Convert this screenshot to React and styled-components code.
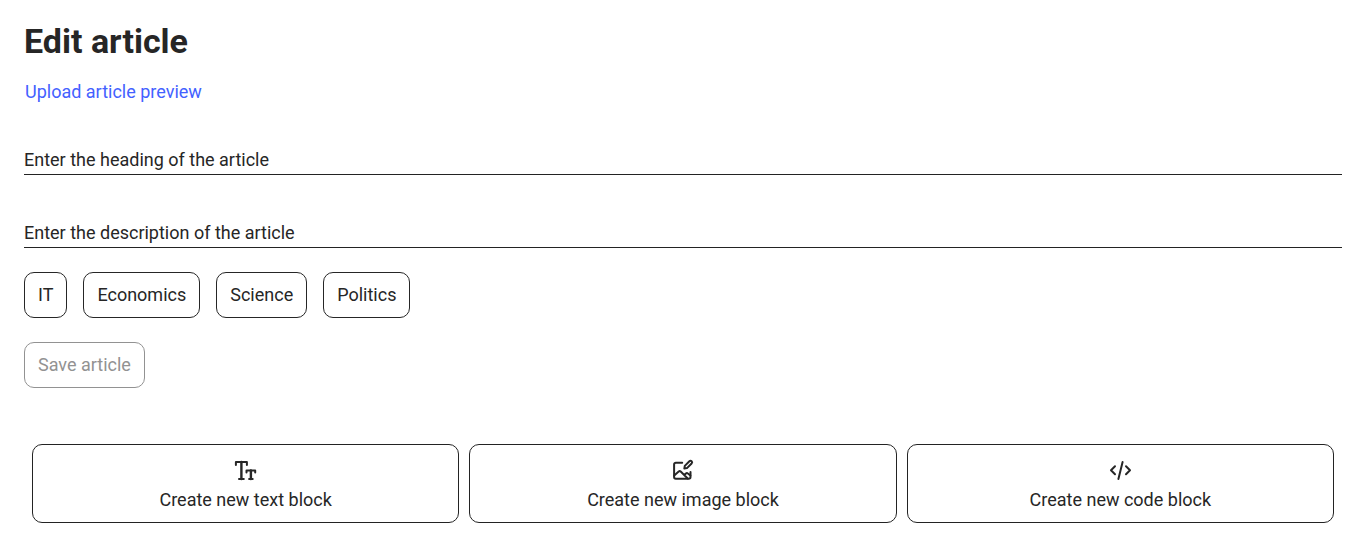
import React, { useState } from "react";
import styled, { createGlobalStyle } from "styled-components";

const GlobalStyle = createGlobalStyle`
  *, *::before, *::after { box-sizing: border-box; }
  body {
    margin: 0;
    background: #fff;
    color: #262626;
    font: 400 18px/24px Roboto, "Liberation Sans", sans-serif;
  }
  button, input { font: inherit; color: inherit; }
`;

const Page = styled.main`
  display: flex;
  flex-direction: column;
  align-items: stretch;
  gap: 24px;
  padding: 19px 24px;
`;

const Header = styled.header`
  display: flex;
  flex-direction: column;
  align-items: flex-start;
  gap: 18px;
`;

const Title = styled.h1`
  margin: 0;
  font-size: 34px;
  line-height: 44px;
  font-weight: 700;
`;

const UploadButton = styled.button`
  padding: 0 1px;
  border: 0;
  background: none;
  color: #4361ff;
  line-height: 21px;
  cursor: pointer;
`;

const TextField = styled.input`
  width: 100%;
  height: 49px;
  padding: 20px 0 2px;
  border: 0;
  border-bottom: 1px solid #232323;
  border-radius: 0;
  background: none;
  outline: none;
  &::placeholder { color: #262626; opacity: 1; }
`;

const Categories = styled.div`
  display: flex;
  flex-wrap: wrap;
  gap: 16px;
`;

const Button = styled.button`
  align-self: flex-start;
  height: 46px;
  padding: 0 13px;
  border: 1px solid currentColor;
  border-radius: 10px;
  background: ${({ $active }) => ($active ? "#eceefe" : "#fff")};
  cursor: pointer;
  &:disabled { color: #929292; cursor: default; }
`;

const BlockBar = styled.div`
  display: flex;
  gap: 10px;
  padding: 32px 8px 0;
`;

const BlockButton = styled.button`
  flex: 1 1 0;
  display: flex;
  flex-direction: column;
  align-items: center;
  gap: 5px;
  padding: 13px 12px 10px;
  border: 1px solid #232323;
  border-radius: 10px;
  background: #fff;
  cursor: pointer;
`;

const Icon = styled.svg`
  width: 25px;
  height: 25px;
  fill: none;
  stroke: currentColor;
  stroke-width: 2;
  stroke-linecap: round;
  stroke-linejoin: round;
`;

const TextIcon = () => (
  <Icon viewBox="0 0 25 25" aria-hidden="true">
    <path d="M2.900 7V4h11v3M13.500 14.600v-2.200h8.700v2.200" />
    <path d="M8.400 4v17M17.900 12.400v8.600" strokeWidth="2.400" />
    <path d="M6 21h4.800M16.100 21h3.600" />
  </Icon>
);

const ImageIcon = () => (
  <Icon viewBox="0 0 25 25" aria-hidden="true" strokeWidth="2">
    <path d="M12.200 4.700H5.800a1.700 1.700 0 0 0-1.700 1.700V19a1.700 1.700 0 0 0 1.700 1.700h13a1.700 1.700 0 0 0 1.700-1.700v-5" />
    <path d="M4.200 17.500l4.500-4q1-.8 2 0l7 7M14.500 17l1.400-1.500q1-.9 2 0l2.500 2" />
    <path d="M14.300 10.600l.5-2.700 4.600-4.600a1.550 1.550 0 0 1 2.200 2.200L17 10.100z" />
  </Icon>
);

const CodeIcon = () => (
  <Icon viewBox="0 0 25 25" aria-hidden="true">
    <path d="M7 8.200l-4 4 4 4M18 8.200l4 4-4 4M14.600 4l-4.200 17" />
  </Icon>
);

const categories = ["IT", "Economics", "Science", "Politics"];

const blocks = [
  { label: "Create new text block", Glyph: TextIcon },
  { label: "Create new image block", Glyph: ImageIcon },
  { label: "Create new code block", Glyph: CodeIcon },
];

export default function App() {
  const [selected, setSelected] = useState([]);
  const toggle = (name) =>
    setSelected((list) => (list.includes(name) ? list.filter((n) => n !== name) : [...list, name]));

  return (
    <>
      <GlobalStyle />
      <Page>
        <Header>
          <Title>Edit article</Title>
          <UploadButton type="button">Upload article preview</UploadButton>
        </Header>
        <TextField aria-label="Article heading" placeholder="Enter the heading of the article" />
        <TextField aria-label="Article description" placeholder="Enter the description of the article" />
        <Categories>
          {categories.map((name) => (
            <Button key={name} type="button" $active={selected.includes(name)} aria-pressed={selected.includes(name)} onClick={() => toggle(name)}>
              {name}
            </Button>
          ))}
        </Categories>
        <Button type="button" disabled>Save article</Button>
        <BlockBar>
          {blocks.map(({ label, Glyph }) => (
            <BlockButton key={label} type="button">
              <Glyph />
              <span>{label}</span>
            </BlockButton>
          ))}
        </BlockBar>
      </Page>
    </>
  );
}
